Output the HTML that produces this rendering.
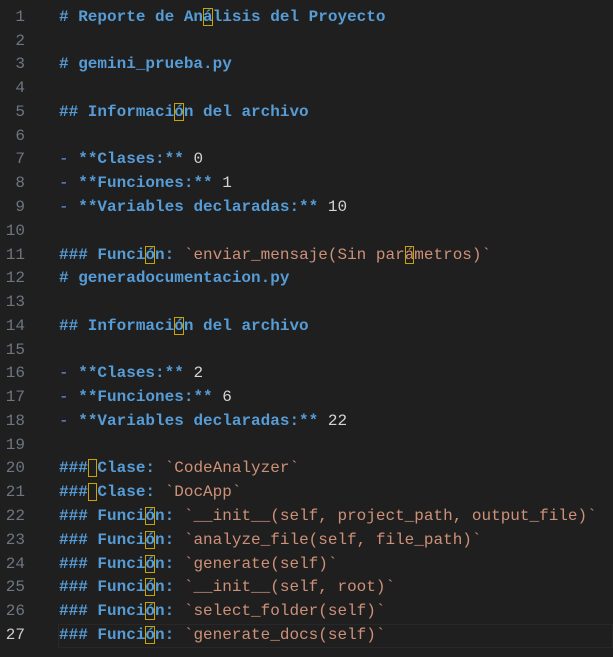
<!DOCTYPE html>
<html><head><meta charset="utf-8"><style>
body{margin:0;background:#1f1f1f;width:613px;height:657px;overflow:hidden;font-family:"Liberation Mono",monospace;font-size:16px}
.l{position:absolute;left:0;height:23.77px;line-height:23.77px;white-space:pre;width:613px}
.n{position:absolute;right:588px;color:#6e7681;text-align:right}
.t{position:absolute;left:59px;color:#d4d4d4}
.h{color:#569cd6;font-weight:bold}
.c{color:#ce9178;font-weight:normal}
.d{color:#6796e6}
.u{outline:1px solid #c9a400;outline-offset:-1px}
.cur{position:absolute;left:58px;right:0;top:0;bottom:0;border:1px solid #282828}
</style></head><body>
<div id="e"></div>
<script>
var L=[
'<span class="h"># Reporte de An<span class="u">á</span>lisis del Proyecto</span>',
'',
'<span class="h"># gemini_prueba.py</span>',
'',
'<span class="h">## Informaci<span class="u">ó</span>n del archivo</span>',
'',
'<span class="d">-</span> <span class="h">**Clases:**</span> 0',
'<span class="d">-</span> <span class="h">**Funciones:**</span> 1',
'<span class="d">-</span> <span class="h">**Variables declaradas:**</span> 10',
'',
'<span class="h">### Funci<span class="u">ó</span>n: <span class="c">`enviar_mensaje(Sin par<span class="u">á</span>metros)`</span></span>',
'<span class="h"># generadocumentacion.py</span>',
'',
'<span class="h">## Informaci<span class="u">ó</span>n del archivo</span>',
'',
'<span class="d">-</span> <span class="h">**Clases:**</span> 2',
'<span class="d">-</span> <span class="h">**Funciones:**</span> 6',
'<span class="d">-</span> <span class="h">**Variables declaradas:**</span> 22',
'',
'<span class="h">###<span class="u"> </span>Clase: <span class="c">`CodeAnalyzer`</span></span>',
'<span class="h">###<span class="u"> </span>Clase: <span class="c">`DocApp`</span></span>',
'<span class="h">### Funci<span class="u">ó</span>n: <span class="c">`__init__(self, project_path, output_file)`</span></span>',
'<span class="h">### Funci<span class="u">ó</span>n: <span class="c">`analyze_file(self, file_path)`</span></span>',
'<span class="h">### Funci<span class="u">ó</span>n: <span class="c">`generate(self)`</span></span>',
'<span class="h">### Funci<span class="u">ó</span>n: <span class="c">`__init__(self, root)`</span></span>',
'<span class="h">### Funci<span class="u">ó</span>n: <span class="c">`select_folder(self)`</span></span>',
'<span class="h">### Funci<span class="u">ó</span>n: <span class="c">`generate_docs(self)`</span></span>'
];
var h='';
for(var i=0;i<L.length;i++){
 var last=i==L.length-1;
 h+='<div class="l" style="top:'+(5.8+i*23.77)+'px">'+(last?'<div class="cur"></div>':'')+'<span class="n"'+(last?' style="color:#cccccc"':'')+'>'+(i+1)+'</span><span class="t">'+L[i]+'</span></div>';
}
document.getElementById('e').innerHTML=h;
</script>
</body></html>
